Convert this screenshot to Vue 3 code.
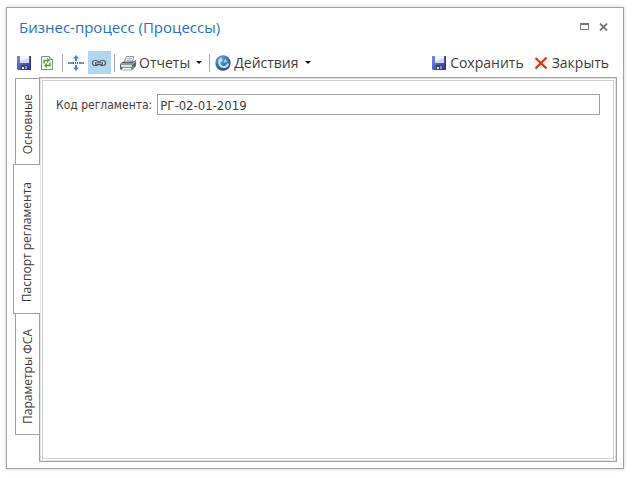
<template>
  <div class="desk">
    <section class="window" aria-labelledby="window-title">
      <header class="title-bar">
        <h1 id="window-title">Бизнес-процесс (Процессы)</h1>
        <div class="window-buttons">
          <button type="button" aria-label="Развернуть" @click="maximized = !maximized">
            <svg width="9" height="7" viewBox="0 0 9 7" shape-rendering="crispEdges">
              <path d="M0 0h9v7H0zM1 2v4h7V2z" fill="#777" fill-rule="evenodd" />
            </svg>
          </button>
          <button type="button" aria-label="Закрыть окно">
            <svg width="9" height="8" viewBox="0 0 9 8">
              <path d="M1 .5l7 7M8 .5l-7 7" stroke="#777" stroke-width="1.8" />
            </svg>
          </button>
        </div>
      </header>

      <div class="toolbar">
        <button type="button" class="tool" aria-label="Сохранить запись">
          <svg class="icon" viewBox="0 0 16 16"><use href="#floppy" /></svg>
        </button>
        <button type="button" class="tool" aria-label="Обновить">
          <svg class="icon" viewBox="0 0 16 16">
            <path d="M2.5 1.5h8l3 3v10h-11z" fill="#f4f7fb" stroke="#7f8fa3" />
            <path d="M10.5 1.5v3h3" fill="#dde3ea" stroke="#7f8fa3" />
            <path d="M5 8.5V5.5h3.5M11 7.5v3H7.5" fill="none" stroke="#6a9a1c" stroke-width="1.5" />
            <path d="M8 3l3 2.5L8 8zM8 8l-3 2.5L8 13z" fill="#6a9a1c" />
          </svg>
        </button>
        <span class="divider"></span>
        <button type="button" class="tool" aria-label="Разделить область">
          <svg class="icon" viewBox="0 0 16 16">
            <path d="M8 0l3 3.5H9V6H7V3.5H5zM8 16l3-3.5H9V10H7v2.5H5z" fill="#3f86de" />
            <path d="M0 8h5M11 8h5" stroke="#7b8fa8" stroke-width="2" />
            <path d="M5 8h6" stroke="#53657a" stroke-width="2" stroke-dasharray="1 1" />
          </svg>
        </button>
        <button
          type="button"
          class="tool"
          :class="{ pressed: linked }"
          :aria-pressed="linked"
          aria-label="Связь"
          @click="linked = !linked"
        >
          <svg class="icon" viewBox="0 0 16 16">
            <g fill="#d3e4f2" stroke="#4b5566" stroke-width="1.2">
              <rect x="1.5" y="5.5" width="6" height="5" rx="2.5" />
              <rect x="8.5" y="5.5" width="6" height="5" rx="2.5" />
            </g>
            <path d="M4 8.5h8" stroke="#3b4454" stroke-width="2.4" />
            <path d="M5 8.3h6" stroke="#dfe6ee" stroke-width=".8" />
          </svg>
        </button>
        <span class="divider"></span>
        <button type="button" class="tool" aria-haspopup="menu">
          <svg class="icon" viewBox="0 0 16 16">
            <path d="M6.500 1.500H14l-2 6H4z" fill="#fff" stroke="#8e98a4" />
            <path d="M7.500 3.500H12M7 5.500h4.500" stroke="#a8b4c2" />
            <path d="M0 9l3-2.500h10L16 5v6l-3.500 3.500H0z" fill="#59636f" />
            <path d="M.5 9h12L15.500 6.500" fill="none" stroke="#cbd3da" />
            <path d="M1 10h11v2H1z" fill="#dbe0e5" />
            <path d="M2.500 12.500H11l1 2.500H1.500z" fill="#fff" stroke="#78838e" stroke-width=".7" />
            <path d="M11.500 11.500H14v2h-2.500z" fill="#4fc042" />
          </svg>
          <span>Отчеты</span>
          <span class="caret"></span>
        </button>
        <span class="divider"></span>
        <button type="button" class="tool" aria-haspopup="menu">
          <svg class="icon" viewBox="0 0 16 16">
            <defs>
              <radialGradient id="ball" cx=".35" cy=".25" r=".8">
                <stop offset="0" stop-color="#6fa8d8" />
                <stop offset=".5" stop-color="#3679b2" />
                <stop offset="1" stop-color="#1b4f80" />
              </radialGradient>
            </defs>
            <circle cx="8" cy="8" r="7.7" fill="url(#ball)" />
            <path
              d="M4.800 5.500C3.500 9 5.500 12 8.500 12c2.500 0 4.200-1.500 4.500-3.500"
              fill="none"
              stroke="#c4def0"
              stroke-width="2.2"
            />
            <path d="M2.500 6.500L6 2l2 4.500z" fill="#c4def0" />
            <path d="M8.500 8L10 3.500 13 7z" fill="#9cc5e2" />
          </svg>
          <span>Действия</span>
          <span class="caret"></span>
        </button>

        <div class="toolbar-end">
          <button type="button" class="tool">
            <svg class="icon" viewBox="0 0 16 16"><use href="#floppy" /></svg>
            <span>Сохранить</span>
          </button>
          <button type="button" class="tool">
            <svg class="icon" viewBox="0 0 16 16">
              <path d="M2.500 3l11 10.500M13.500 2.500l-11 11" stroke="#e92d12" stroke-width="2.2" />
            </svg>
            <span>Закрыть</span>
          </button>
        </div>
      </div>

      <div class="body">
        <div class="tabs" role="tablist" aria-orientation="vertical">
          <button
            v-for="tab in tabs"
            :id="`tab-${tab.id}`"
            :key="tab.id"
            type="button"
            role="tab"
            class="tab"
            :class="{ active: tab.id === activeTab }"
            :aria-selected="tab.id === activeTab"
            aria-controls="panel"
            @click="activeTab = tab.id"
          >
            <span>{{ tab.title }}</span>
          </button>
        </div>
        <div id="panel" class="panel" role="tabpanel" :aria-labelledby="`tab-${activeTab}`">
          <div class="panel-inner">
            <div v-if="activeTab === 'passport'" class="field">
              <label for="code">Код регламента:</label>
              <input id="code" v-model="code" type="text">
            </div>
          </div>
        </div>
      </div>
    </section>

    <svg class="symbols" aria-hidden="true">
      <defs>
        <linearGradient id="disk" x1="0" y1="0" x2="1" y2="1">
          <stop offset="0" stop-color="#7f8aea" />
          <stop offset="1" stop-color="#2a2f9c" />
        </linearGradient>
        <symbol id="floppy" viewBox="0 0 16 16">
          <path d="M1 1h14v14H2l-1-1z" fill="url(#disk)" />
          <path d="M4 1h9v7H4z" fill="#f4f6ff" />
          <path d="M4 6l9-3v5H4z" fill="#d3daf0" />
          <path d="M5 10h7v5H5z" fill="#3a3f66" />
          <path d="M6 12h2v2H6z" fill="#e8eaf4" />
          <path d="M9 11h2v3H9z" fill="#8d92b5" />
          <path d="M14 1h1v14h-1z" fill="#30358c" />
        </symbol>
      </defs>
    </svg>
  </div>
</template>

<script setup>
import { ref } from 'vue'

const tabs = [
  { id: 'main', title: 'Основные' },
  { id: 'passport', title: 'Паспорт регламента' },
  { id: 'params', title: 'Параметры ФСА' },
]

const activeTab = ref('passport')
const code = ref('РГ-02-01-2019')
const linked = ref(true)
const maximized = ref(false)
</script>

<style>
body {
  background: #fff;
}
</style>

<style scoped>
.desk {
  box-sizing: border-box;
  display: flex;
  min-height: 100vh;
  padding: 7px 11px 9px 6px;
  font-family: "Open Sans", "Noto Sans", sans-serif;
  color: #3c3c3c;
}

button {
  margin: 0;
  padding: 0;
  border: 0;
  background: none;
  color: inherit;
  font: inherit;
}

.window {
  flex: 1;
  min-width: 0;
  display: flex;
  flex-direction: column;
  padding: 0 6px 6px;
  border: 1px solid #a0a0a0;
  background: #fff;
  box-shadow: 0 0 4px rgba(0, 0, 0, 0.2);
}

.title-bar {
  display: flex;
  align-items: center;
  justify-content: space-between;
  height: 38px;
  padding: 0 9px 0 6px;
}

h1 {
  margin: 0;
  color: #1f72c6;
  font-size: 15px;
  font-weight: 400;
}

.window-buttons {
  display: flex;
  gap: 10px;
}

.window-buttons button {
  display: flex;
}

.toolbar {
  box-sizing: border-box;
  display: flex;
  align-items: center;
  height: 31px;
  padding: 2px 4px 0 0;
  font-size: 14px;
}

.tool {
  display: flex;
  align-items: center;
  gap: 3px;
  height: 23px;
  padding: 0 4px 0 3px;
  white-space: nowrap;
}

.pressed {
  background: #b1d6f0;
}

.icon {
  flex: none;
  width: 16px;
  height: 16px;
}

.divider {
  width: 1px;
  height: 18px;
  margin: 0 2px 0 3px;
  background: #aaa;
}

.caret {
  margin-left: 3px;
  border: 3px solid transparent;
  border-top-color: #111;
  border-bottom: 0;
}

.toolbar-end {
  display: flex;
  gap: 2px;
  margin-left: auto;
}

.body {
  flex: 1;
  display: flex;
}

.tabs {
  display: flex;
  flex-direction: column;
  align-items: flex-end;
  width: 26px;
  padding-top: 1px;
}

.tab {
  display: flex;
  align-items: center;
  justify-content: center;
  width: 24px;
  margin-bottom: -1px;
  padding: 15px 0 10px;
  border: 1px solid #a0a0a0;
  border-right: 0;
  background: #fff;
  font-size: 12px;
}

.tab.active {
  position: relative;
  width: 27px;
  margin-right: -1px;
  padding: 17px 0 10px;
}

.tab span {
  writing-mode: vertical-rl;
  transform: rotate(180deg);
  line-height: 16px;
}

.panel {
  flex: 1;
  display: flex;
  padding: 2px;
  border: 1px solid #a0a0a0;
  box-shadow: inset 0 0 0 1px #e2e2e2;
}

.panel-inner {
  flex: 1;
  padding: 13px;
  border: 1px solid #ccc;
}

.field {
  display: flex;
  align-items: center;
  gap: 5px;
  font-family: "DejaVu Sans Condensed", "DejaVu Sans", sans-serif;
  font-size: 12px;
}

input {
  box-sizing: border-box;
  flex: 1;
  min-width: 0;
  height: 21px;
  padding: 2px 2px 0;
  border: 1px solid #a0a0a0;
  background: #fff;
  color: inherit;
  font-family: inherit;
  font-size: 13px;
}

.symbols {
  position: absolute;
  width: 0;
  height: 0;
}
</style>
